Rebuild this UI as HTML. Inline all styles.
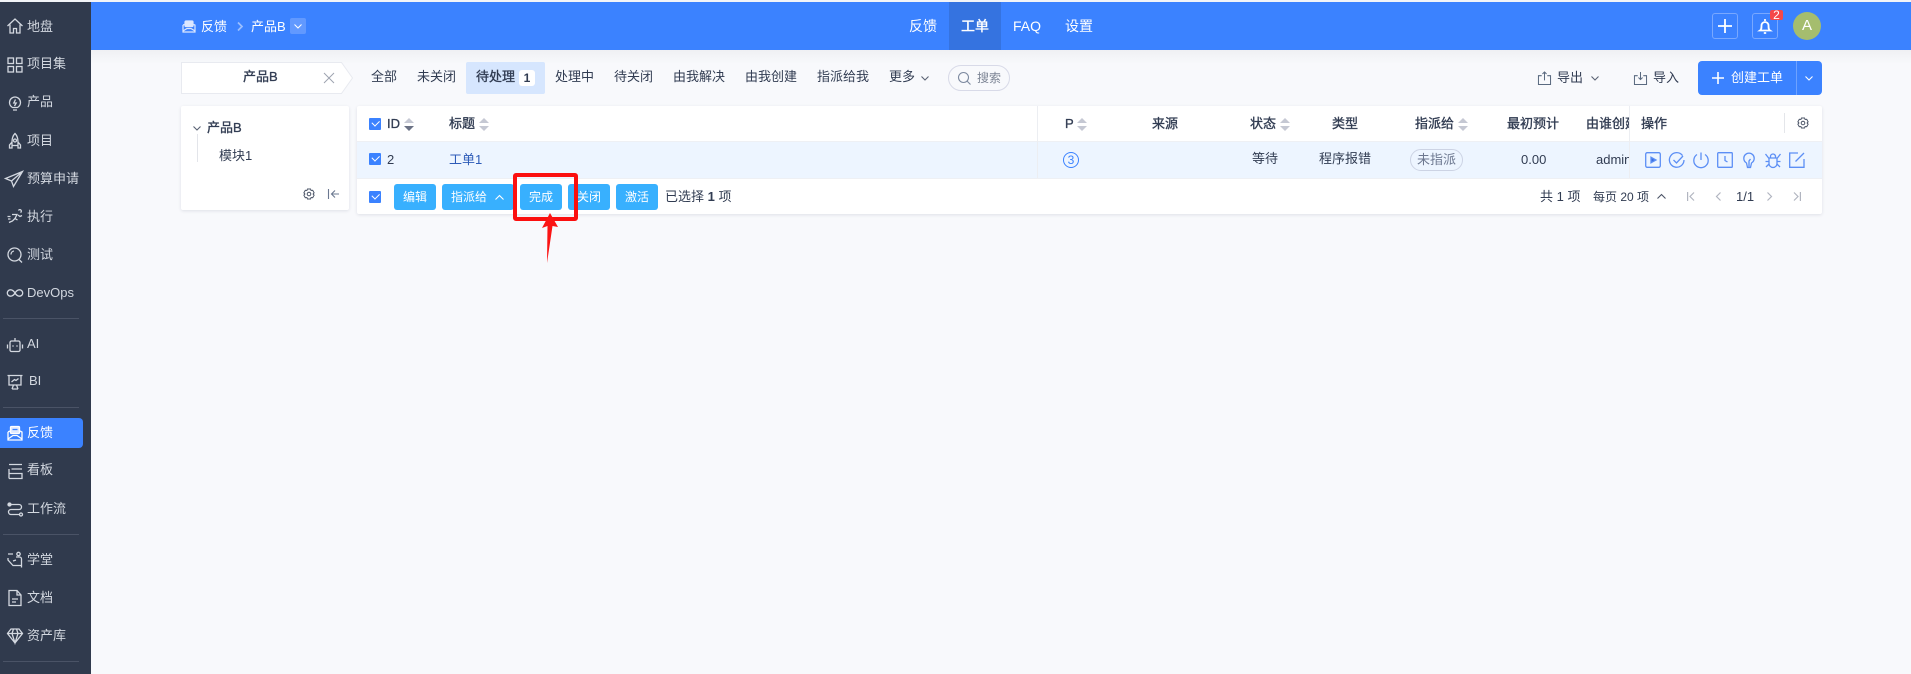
<!DOCTYPE html>
<html lang="zh"><head><meta charset="utf-8"><title>反馈</title>
<style>
*{box-sizing:border-box}
html,body{margin:0;padding:0}
body{width:1911px;height:674px;overflow:hidden;position:relative;background:#f8f9fc;font-family:"Liberation Sans","Noto Sans CJK SC",sans-serif;font-size:13px;color:#313c52}
.a{position:absolute}
.t{position:absolute;line-height:20px;height:20px;white-space:nowrap;margin-top:1px}
.t.f{margin-top:0}
.s{color:#d3d8e0}
.n{color:#fff;font-size:14px}
.b{color:#313c52;-webkit-text-stroke:.35px #313c52}
.m{-webkit-text-stroke:.35px currentColor}
.btn{position:absolute;top:184px;height:26px;background:#38b0fe;border-radius:3px;color:#fff;font-size:12px;line-height:26px;text-align:center}
svg{position:absolute;overflow:visible;fill:none}
.ic{stroke:#d3d8e0;stroke-width:1.3;width:16px;height:16px;left:7px}
.op{stroke:#5c8ff5;stroke-width:1.3;width:16px;height:16px;top:152px}
.hr{position:absolute;left:3px;width:76px;height:1px;background:#4a5366}
.sort{position:absolute;width:10px;height:13px;margin-top:1px}
.sort:before,.sort:after{content:"";position:absolute;left:0;border-left:5px solid transparent;border-right:5px solid transparent}
.sort:before{top:0;border-bottom:5px solid #c5c8d3}
.sort:after{bottom:0;border-top:5px solid #c5c8d3}
.sort.d:after{border-top-color:#6b7285}
.ck{position:absolute;left:369px;width:12px;height:12px;background:#3b82ff;border-radius:1px}
.ck:after{content:"";position:absolute;left:3px;top:2px;width:6px;height:3.5px;border-left:1.5px solid #fff;border-bottom:1.5px solid #fff;transform:rotate(-45deg)}
</style></head><body>

<!-- top strip / header -->
<div class="a" style="left:0;top:0;width:1911px;height:2px;background:#f2f4f8"></div>
<div class="a" style="left:91px;top:50px;width:1820px;height:14px;background:linear-gradient(#eff0f3,#f8f9fc)"></div>
<div class="a" style="left:91px;top:2px;width:1820px;height:48px;background:#3b82ff"></div>
<div class="a" style="left:949px;top:2px;width:52px;height:48px;background:#3573e0"></div>

<!-- sidebar -->
<div class="a" style="left:0;top:2px;width:91px;height:672px;background:#303a4d"></div>
<div class="hr" style="top:318px"></div>
<div class="hr" style="top:407px"></div>
<div class="hr" style="top:534px"></div>
<div class="hr" style="top:661px"></div>
<div class="a" style="left:0;top:418px;width:83px;height:30px;background:#3b82ff;border-radius:0 4px 4px 0"></div>

<svg class="ic" style="top:18px" viewBox="0 0 16 16"><path d="M.5 8 8 1l7.500 7M3 6.500V15h3.500v-4.500h3V15H13V6.500"/></svg>
<div class="t s" style="left:27px;top:16px">地盘</div>
<svg class="ic" style="top:57px" viewBox="0 0 16 16"><rect x="1" y="1" width="5.500" height="5.500"/><rect x="9.500" y="1" width="5.500" height="5.500"/><rect x="1" y="9.500" width="5.500" height="5.500"/><rect x="9.500" y="9.500" width="5.500" height="5.500"/></svg>
<div class="t s f" style="left:27px;top:54px">项目集</div>
<svg class="ic" style="top:95px" viewBox="0 0 16 16"><path d="M5.500 12.500C3.500 11.300 2.500 9.500 2.500 7.500a5.500 5.500 0 0 1 11 0c0 2-1 3.800-3 5zM6 15h4M8.500 4.500 6.800 8h2.400L7.500 11"/></svg>
<div class="t s f" style="left:27px;top:92px">产品</div>
<svg class="ic" style="top:133px" viewBox="0 0 16 16"><path d="M8 .5c2.500 2.500 3 5.500 3 8.500v3.500H5V9c0-3 .5-6 3-8.500zM5 9l-2.500 3v3H5v-2.500M11 9l2.500 3v3H11v-2.500"/><circle cx="8" cy="7.500" r="1.500"/></svg>
<div class="t s" style="left:27px;top:130px">项目</div>
<svg class="ic" style="top:171px;width:18px;left:5px" viewBox="0 0 18 16"><path d="M17.500.5.500 7.500l6 2.500 2 5.500L17.500.500zM6.500 10 17.500.5"/></svg>
<div class="t s" style="left:27px;top:168px">预算申请</div>
<svg class="ic" style="top:209px" viewBox="0 0 16 16"><path d="M11.500 1.500a1.500 1.500 0 1 1 2 2M5 5.500h5l-2 4 2.500 1.500M8 9.500 5.500 12 2 13.500M.5 7.500h3M1 10h2.500M11 6l2 1.500 2-1"/></svg>
<div class="t s" style="left:27px;top:206px">执行</div>
<svg class="ic" style="top:247px" viewBox="0 0 16 16"><circle cx="7.500" cy="7.500" r="6.500"/><path d="m11.500 12 3.500 3.500M4 7.500a3.500 3.500 0 0 1 3-3.500"/></svg>
<div class="t s" style="left:27px;top:244px">测试</div>
<svg class="ic" style="top:285px" viewBox="0 0 16 16"><path d="M8 8C6.500 5.500 5 4.800 3.500 4.800a3.200 3.200 0 0 0 0 6.400C5 11.200 6.500 10.500 8 8c1.500-2.500 3-3.200 4.500-3.200a3.200 3.200 0 0 1 0 6.400C11 11.200 9.500 10.500 8 8z"/></svg>
<div class="t s" style="left:27px;top:282px">DevOps</div>

<svg class="ic" style="top:337px" viewBox="0 0 16 16"><rect x="3" y="4" width="10" height="10.500" rx="1.500"/><path d="M8 4V1M.5 7.500v4M15.500 7.500v4"/><path d="M5.500 9h1M9.500 9h1" stroke-width="1.800"/></svg>
<div class="t s f" style="left:27px;top:334px">AI</div>
<svg class="ic" style="top:374px" viewBox="0 0 16 16"><path d="M.5 1.500h15M2 1.500V11h12V1.500M5 15l1.500-4M11 15l-1.500-4M5 15h6M4.500 8l3-2.500 1.500 1 2.500-2"/></svg>
<div class="t s f" style="left:29px;top:371px">BI</div>

<svg class="ic" style="top:425px;stroke:#fff" viewBox="0 0 16 16"><path d="M1 7v8h14V7l-2-1M1 7l2-1M1 14l5-3.500h4l5 3.500"/><rect x="3.500" y="1.500" width="9" height="7" rx="1" fill="#e0eaff"/><path d="M5.500 4.500h5" stroke="#3b82ff"/></svg>
<div class="t f" style="left:27px;top:423px;color:#fff">反馈</div>
<svg class="ic" style="top:463px" viewBox="0 0 16 16"><path d="M2 1.500h13M4.500 6H15M2 6v9.500M2 10.500h13v5H2"/></svg>
<div class="t s f" style="left:27px;top:460px">看板</div>
<svg class="ic" style="top:501px" viewBox="0 0 16 16"><path d="M3 3.500h9a2.500 2.500 0 0 1 0 5H4a2.500 2.500 0 0 0 0 5h9"/><circle cx="2.500" cy="3.500" r="1.500" fill="#d3d8e0"/><circle cx="14" cy="13.500" r="1.500"/></svg>
<div class="t s" style="left:27px;top:498px">工作流</div>

<svg class="ic" style="top:552px" viewBox="0 0 16 16"><path d="M1 2h5M1 6v2l5 5.500h8.500V7a2 2 0 0 0-2-2H9M6 9l3-1M14.500 13.500v2"/><circle cx="11.500" cy="2" r="1.700"/></svg>
<div class="t s" style="left:27px;top:549px">学堂</div>
<svg class="ic" style="top:590px" viewBox="0 0 16 16"><path d="M2 .5h8l4 4.500v10.500H2zM10 .5V5h4M5 9h6M5 12h4"/></svg>
<div class="t s" style="left:27px;top:587px">文档</div>
<svg class="ic" style="top:628px" viewBox="0 0 16 16"><path d="M4 1h8l3.500 4.500L8 15 .5 5.500zM.5 5.500h15M5 5.500 8 15l3-9.500M5 5.500 6.500 1M11 5.500 9.500 1"/></svg>
<div class="t s" style="left:27px;top:625px">资产库</div>

<!-- header content -->
<svg style="left:182px;top:20px;width:14px;height:13px;stroke:#dbe7ff;stroke-width:1.2" viewBox="0 0 14 13"><path d="M1 5v7h12V5l-1.500-.5M1 5l1.500-.5M1 11l4-2.500h4L13 11"/><rect x="3" y="1" width="8" height="5.500" rx="1" fill="#dbe7ff"/></svg>
<div class="t n" style="left:201px;top:16px;font-size:13px">反馈</div>
<svg style="left:237px;top:22px;width:6px;height:9px;stroke:#9bbfff;stroke-width:1.700" viewBox="0 0 6 9"><path d="m1 .5 4 4-4 4"/></svg>
<div class="t n" style="left:251px;top:16px;font-size:13px">产品B</div>
<div class="a" style="left:290px;top:18px;width:16px;height:16px;background:#6199ff;border-radius:2px"></div>
<svg style="left:294px;top:24px;width:8px;height:5px;stroke:#fff;stroke-width:1" viewBox="0 0 8 5"><path d="m.5.500 3.500 3.500 3.500-3.500"/></svg>
<div class="t n" style="left:909px;top:15px">反馈</div>
<div class="t n m" style="left:961px;top:15px">工单</div>
<div class="t n" style="left:1013px;top:15px">FAQ</div>
<div class="t n" style="left:1065px;top:15px">设置</div>

<div class="a" style="left:1712px;top:13px;width:26px;height:26px;border:1px solid #79a8ff;border-radius:3px"></div>
<svg style="left:1718px;top:19px;width:14px;height:14px;stroke:#fff;stroke-width:1.800" viewBox="0 0 14 14"><path d="M7 0v14M0 7h14"/></svg>
<div class="a" style="left:1752px;top:13px;width:26px;height:26px;border:1px solid #79a8ff;border-radius:3px"></div>
<svg style="left:1759px;top:18px;width:12px;height:16px;stroke:#fff;stroke-width:1.800" viewBox="0 0 12 16"><path d="M1 12.500c1.500-1 1.500-2.500 1.500-5a3.500 3.500 0 0 1 7 0c0 2.500 0 4 1.500 5zM6 1v2M4.800 15h2.400"/></svg>
<div class="a" style="left:1770px;top:10px;width:13px;height:10px;background:#f5484a;border-radius:2px;color:#fff;font-size:12px;line-height:10px;text-align:center">2</div>
<div class="a" style="left:1793px;top:12px;width:28px;height:28px;background:#a5bd6e;border-radius:50%;color:#fff;font-size:15px;line-height:28px;text-align:center">A</div>

<!-- filter bar -->
<svg style="left:181px;top:62px;width:172px;height:32px" viewBox="0 0 172 32"><path d="M.5.500H160.500L171.500 16 160.500 31.500H.5z" fill="#fff" stroke="#e8eaf0"/></svg>
<div class="t f m" style="left:243px;top:67px">产品B</div>
<svg style="left:324px;top:73px;width:10px;height:10px;stroke:#9ea3b0;stroke-width:1" viewBox="0 0 10 10"><path d="m0 0 10 10M10 0 0 10"/></svg>
<div class="t f" style="left:371px;top:67px">全部</div>
<div class="t f" style="left:417px;top:67px">未关闭</div>
<div class="a" style="left:466px;top:62px;width:79px;height:32px;background:#d6e6fe;border-radius:2px"></div>
<div class="t f m" style="left:476px;top:67px">待处理</div>
<div class="a" style="left:519px;top:70px;width:16px;height:16px;background:#fff;border-radius:3px;font-size:12px;font-weight:700;line-height:16px;text-align:center">1</div>
<div class="t f" style="left:555px;top:67px">处理中</div>
<div class="t f" style="left:614px;top:67px">待关闭</div>
<div class="t f" style="left:673px;top:67px">由我解决</div>
<div class="t f" style="left:745px;top:67px">由我创建</div>
<div class="t f" style="left:817px;top:67px">指派给我</div>
<div class="t f" style="left:889px;top:67px">更多</div>
<svg style="left:921px;top:76px;width:8px;height:5px;stroke:#5a6274;stroke-width:1.100" viewBox="0 0 8 5"><path d="m.5.500 3.500 3.500 3.500-3.500"/></svg>
<div class="a" style="left:948px;top:65px;width:62px;height:26px;border:1px solid #d8dae8;border-radius:13px"></div>
<svg style="left:958px;top:72px;width:13px;height:13px;stroke:#7d8aa0;stroke-width:1.100" viewBox="0 0 13 13"><circle cx="5.500" cy="5.500" r="5"/><path d="m9 9 3.500 3.500"/></svg>
<div class="t f" style="left:977px;top:68px;font-size:12px;color:#7d8595">搜索</div>

<svg style="left:1538px;top:71px;width:13px;height:14px;stroke:#5a6a80;stroke-width:1.100" viewBox="0 0 14 15"><path d="M4 5H.5v9.500h13V5H10M7 10V1M4.800 3.200 7 1l2.200 2.200"/></svg>
<div class="t f" style="left:1557px;top:68px">导出</div>
<svg style="left:1591px;top:76px;width:8px;height:5px;stroke:#5a6274;stroke-width:1.100" viewBox="0 0 8 5"><path d="m.5.500 3.500 3.500 3.500-3.500"/></svg>
<svg style="left:1634px;top:71px;width:13px;height:14px;stroke:#5a6a80;stroke-width:1.100" viewBox="0 0 14 15"><path d="M4 5H.5v9.500h13V5H10M7 1v8M4.800 7 7 9.200 9.200 7"/></svg>
<div class="t f" style="left:1653px;top:68px">导入</div>
<div class="a" style="left:1698px;top:61px;width:124px;height:34px;background:#3b82ff;border-radius:4px"></div>
<div class="a" style="left:1796px;top:61px;width:1px;height:34px;background:#6ea2ff"></div>
<svg style="left:1712px;top:72px;width:12px;height:12px;stroke:#fff;stroke-width:1.600" viewBox="0 0 12 12"><path d="M6 0v12M0 6h12"/></svg>
<div class="t f" style="left:1731px;top:68px;color:#fff">创建工单</div>
<svg style="left:1805px;top:76px;width:8px;height:5px;stroke:#fff;stroke-width:1.100" viewBox="0 0 8 5"><path d="m.5.500 3.500 3.500 3.500-3.500"/></svg>

<!-- left panel -->
<div class="a" style="left:181px;top:106px;width:168px;height:104px;background:#fff;border-radius:2px;box-shadow:0 1px 3px rgba(40,50,80,.12)"></div>
<svg style="left:193px;top:126px;width:8px;height:5px;stroke:#5a6274;stroke-width:1.100" viewBox="0 0 8 5"><path d="m.5.500 3.500 3.500 3.500-3.500"/></svg>
<div class="t m" style="left:207px;top:117px">产品B</div>
<div class="a" style="left:197px;top:134px;width:1px;height:28px;background:#e3e5ea"></div>
<div class="t" style="left:219px;top:145px">模块1</div>
<svg style="left:303px;top:188px;width:12px;height:12px;stroke:#4a5366;stroke-width:1" viewBox="0 0 12 12"><path d="M4.500.5h3l.6 1.500 1.600-.2 1.400 2.500-1 1.200 1 1.200-1.400 2.500-1.600-.2-.6 1.500h-3l-.6-1.500-1.600.2L.9 6.700l1-1.200-1-1.200L2.300 1.800l1.600.2z" transform="translate(0 .5)"/><circle cx="6" cy="6" r="1.800"/></svg>
<svg style="left:328px;top:189px;width:11px;height:10px;stroke:#6b7890;stroke-width:1.100" viewBox="0 0 11 10"><path d="M.5 0v10M11 5H3.500M7 1.500 3.500 5 7 8.500"/></svg>

<!-- table -->
<div class="a" style="left:357px;top:106px;width:1465px;height:108px;background:#fff;border-radius:2px;box-shadow:0 1px 3px rgba(40,50,80,.12)"></div>
<div class="a" style="left:357px;top:141px;width:1465px;height:38px;background:#edf5ff;border-top:1px solid #eef0f4;border-bottom:1px solid #eef0f4"></div>
<div class="a" style="left:1037px;top:106px;width:1px;height:72px;background:#eceef2"></div>
<div class="a" style="left:1629px;top:106px;width:1px;height:72px;background:#eceef2"></div>
<div class="a" style="left:1784px;top:113px;width:1px;height:20px;background:#e4e6ea"></div>

<div class="ck" style="top:118px"></div>
<div class="t b" style="left:387px;top:113px">ID</div><div class="sort d" style="left:404px;top:117px"></div>
<div class="t b" style="left:449px;top:113px">标题</div><div class="sort" style="left:479px;top:117px"></div>
<div class="t b" style="left:1065px;top:113px">P</div><div class="sort" style="left:1077px;top:117px"></div>
<div class="t b" style="left:1152px;top:113px">来源</div>
<div class="t b" style="left:1250px;top:113px">状态</div><div class="sort" style="left:1280px;top:117px"></div>
<div class="t b" style="left:1332px;top:113px">类型</div>
<div class="t b" style="left:1415px;top:113px">指派给</div><div class="sort" style="left:1458px;top:117px"></div>
<div class="t b" style="left:1507px;top:113px">最初预计</div>
<div class="a" style="left:1586px;top:114px;width:43px;height:20px;overflow:hidden"><div class="t b f" style="left:0;top:0">由谁创建</div></div>
<div class="t b" style="left:1641px;top:113px">操作</div>
<svg style="left:1797px;top:117px;width:12px;height:12px;stroke:#4a5366;stroke-width:1" viewBox="0 0 12 12"><path d="M4.500.5h3l.6 1.500 1.600-.2 1.400 2.500-1 1.200 1 1.200-1.400 2.500-1.600-.2-.6 1.500h-3l-.6-1.500-1.600.2L.9 6.700l1-1.200-1-1.200L2.300 1.800l1.600.2z" transform="translate(0 .5)"/><circle cx="6" cy="6" r="1.800"/></svg>

<div class="ck" style="top:153px"></div>
<div class="t" style="left:387px;top:149px">2</div>
<div class="t" style="left:449px;top:149px;color:#2e5cb8">工单1</div>
<div class="a" style="left:1063px;top:152px;width:16px;height:16px;border:1px solid #3b82ff;border-radius:50%;color:#3b82ff;font-size:12px;line-height:14px;text-align:center">3</div>
<div class="t" style="left:1252px;top:148px">等待</div>
<div class="t" style="left:1319px;top:148px">程序报错</div>
<div class="a" style="left:1410px;top:149px;width:53px;height:22px;border:1px solid #ccd3e4;border-radius:11px;color:#6d7890;line-height:20px;text-align:center">未指派</div>
<div class="t" style="left:1521px;top:149px">0.00</div>
<div class="a" style="left:1596px;top:150px;width:33px;height:20px;overflow:hidden"><div class="t f" style="left:0;top:0">admin</div></div>

<svg class="op" style="left:1645px" viewBox="0 0 16 16"><rect x=".7" y=".7" width="14.600" height="14.600" rx="1.500"/><path d="M6 5.200v5.600L11 8z" fill="#3b6fe0"/></svg>
<svg class="op" style="left:1669px" viewBox="0 0 16 16"><path d="M13.500 3.500A7.300 7.300 0 1 0 15 8M4.500 8l3 3 6.500-7"/></svg>
<svg class="op" style="left:1693px" viewBox="0 0 16 16"><path d="M8 .5v7.500M4 2.500a7.200 7.200 0 1 0 8 0"/></svg>
<svg class="op" style="left:1717px" viewBox="0 0 16 16"><rect x=".7" y=".7" width="14.600" height="14.600" rx=".8"/><path d="M8 4v4.500l2.500 1.500"/></svg>
<svg class="op" style="left:1741px" viewBox="0 0 16 16"><path d="M5.500 11C3.800 10 2.800 8.200 2.800 6.300a5.200 5.200 0 0 1 10.400 0c0 1.900-1 3.700-2.700 4.700L9.500 15.500h-3zM8 15V9l1.500-2"/></svg>
<svg class="op" style="left:1765px" viewBox="0 0 16 16"><path d="M4 6h8v5.500a4 4 0 0 1-8 0zM5.500 6V4.500a2.500 2.500 0 0 1 5 0V6M.5 2l3.500 4.500M15.500 2 12 6.500M.5 9.500H4M15.500 9.500H12M1 15l3-3M15 15l-3-3"/></svg>
<svg class="op" style="left:1789px" viewBox="0 0 16 16"><path d="M9 1H.7v14.300H15V7M6.500 9.500 15 1"/></svg>

<!-- footer -->
<div class="ck" style="top:191px"></div>
<div class="btn" style="left:394px;width:42px">编辑</div>
<div class="btn" style="left:442px;width:72px;text-align:left;padding-left:9px">指派给</div>
<svg style="left:495px;top:195px;width:9px;height:5px;stroke:#fff;stroke-width:1.100" viewBox="0 0 9 5"><path d="M.5 4.500 4.500.5l4 4"/></svg>
<div class="btn" style="left:520px;width:42px">完成</div>
<div class="btn" style="left:568px;width:42px">关闭</div>
<div class="btn" style="left:616px;width:42px">激活</div>
<div class="t f" style="left:665px;top:187px">已选择 <b>1</b> 项</div>
<div class="t f" style="left:1540px;top:187px">共 1 项</div>
<div class="t f" style="left:1593px;top:187px;font-size:12px">每页 20 项</div>
<svg style="left:1657px;top:194px;width:9px;height:5px;stroke:#4a5366;stroke-width:1.100" viewBox="0 0 9 5"><path d="M.5 4.500 4.500.5l4 4"/></svg>
<svg style="left:1687px;top:192px;width:8px;height:9px;stroke:#b1b5c0;stroke-width:1.200" viewBox="0 0 8 9"><path d="M.6 0v9M7 .5 3 4.500l4 4"/></svg>
<svg style="left:1716px;top:192px;width:5px;height:9px;stroke:#b1b5c0;stroke-width:1.200" viewBox="0 0 5 9"><path d="M4.500.5.500 4.500l4 4"/></svg>
<div class="t f" style="left:1736px;top:187px">1/1</div>
<svg style="left:1767px;top:192px;width:5px;height:9px;stroke:#b1b5c0;stroke-width:1.200" viewBox="0 0 5 9"><path d="m.5.500 4 4-4 4"/></svg>
<svg style="left:1793px;top:192px;width:8px;height:9px;stroke:#b1b5c0;stroke-width:1.200" viewBox="0 0 8 9"><path d="M7.400 0v9M1 .5l4 4-4 4"/></svg>

<!-- annotation -->
<div class="a" style="left:513px;top:173px;width:65px;height:48px;border:4px solid #fb0f0f;border-radius:3px"></div>
<svg style="left:540px;top:212px;width:20px;height:52px" viewBox="0 0 20 52"><path d="M10 1 2 16l5.500-2L7 51l5.500-37L18 15z" fill="#fb1414"/></svg>
</body></html>
